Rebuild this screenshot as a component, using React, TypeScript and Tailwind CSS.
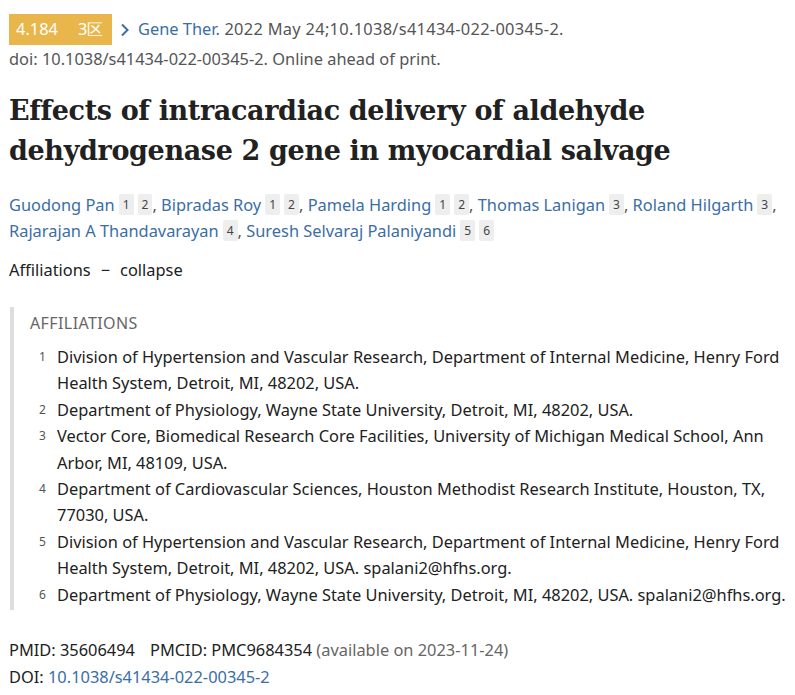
import React from 'react';

const authors = [
  { name: 'Guodong Pan', refs: ['1', '2'] },
  { name: 'Bipradas Roy', refs: ['1', '2'] },
  { name: 'Pamela Harding', refs: ['1', '2'] },
  { name: 'Thomas Lanigan', refs: ['3'] },
  { name: 'Roland Hilgarth', refs: ['3'], br: true },
  { name: 'Rajarajan A Thandavarayan', refs: ['4'] },
  { name: 'Suresh Selvaraj Palaniyandi', refs: ['5', '6'] },
];

const affiliations = [
  ['Division of Hypertension and Vascular Research, Department of Internal Medicine, Henry Ford', 'Health System, Detroit, MI, 48202, USA.'],
  ['Department of Physiology, Wayne State University, Detroit, MI, 48202, USA.'],
  ['Vector Core, Biomedical Research Core Facilities, University of Michigan Medical School, Ann', 'Arbor, MI, 48109, USA.'],
  ['Department of Cardiovascular Sciences, Houston Methodist Research Institute, Houston, TX,', '77030, USA.'],
  ['Division of Hypertension and Vascular Research, Department of Internal Medicine, Henry Ford', 'Health System, Detroit, MI, 48202, USA. spalani2@hfhs.org.'],
  ['Department of Physiology, Wayne State University, Detroit, MI, 48202, USA. spalani2@hfhs.org.'],
];

export default function App() {
  return (
    <div className="min-h-[695px] bg-white px-[9px] pt-[14px] font-['Noto_Sans',sans-serif] text-[16.4px] text-[#212121]">
      {/* journal line */}
      <div className="flex items-center h-[31px]">
        <span className="flex h-[31px] w-[103px] items-center bg-[#e9b64c] pl-[7px] text-white">
          <span>4.184</span>
          <span className="ml-[20px]">3区</span>
        </span>
        <svg className="ml-[8px]" width="10" height="14" viewBox="0 0 10 14" fill="none">
          <path d="M2 1.5 L7.5 7 L2 12.5" stroke="#3a6ea5" strokeWidth="2" />
        </svg>
        <span className="ml-[8px] whitespace-nowrap text-[#555] tracking-[0.3px]">
          <a className="text-[#3a6ea5] tracking-normal">Gene Ther.</a> 2022 May 24;10.1038/s41434-022-00345-2.
        </span>
      </div>
      <div className="mt-[1px] leading-[26px] text-[#555]">
        doi: 10.1038/s41434-022-00345-2. Online ahead of print.
      </div>

      {/* title */}
      <h1 className="mt-[19px] font-['DejaVu_Serif',serif] text-[27px] font-bold leading-[40px] tracking-[-0.35px] text-[#212121]">
        Effects of intracardiac delivery of aldehyde
        <br />
        dehydrogenase 2 gene in myocardial salvage
      </h1>

      {/* authors */}
      <div className="mt-[21px] leading-[26px] text-[#3a6ea5]">
        {authors.map((a, i) => (
          <React.Fragment key={i}>
            <span className="whitespace-nowrap">
              <a>{a.name}</a>
              {a.refs.map((r) => (
                <sup key={r} className="ml-[4px] relative -top-[2px] rounded-[2px] bg-[#eee] px-[4px] py-[2px] text-[12px] text-[#444]">
                  {r}
                </sup>
              ))}
              {i < authors.length - 1 && <span className="text-[#555]">, </span>}
            </span>
            {a.br && <br />}
          </React.Fragment>
        ))}
      </div>

      {/* affiliations toggle */}
      <div className="mt-[13px] flex items-center leading-[26px]">
        <span>Affiliations</span>
        <span className="ml-[10px] text-[#212121]">−</span>
        <span className="ml-[10px]">collapse</span>
      </div>

      {/* affiliations box */}
      <div className="mt-[24px] ml-[1px] border-l-[4px] border-[#ddd] pl-[16px] pb-[2px]">
        <div className="pt-[4px] text-[16px] uppercase tracking-[0.4px] text-[#666]">Affiliations</div>
        <ul className="mt-[9px]">
          {affiliations.map((lines, i) => (
            <li key={i} className="flex leading-[26.4px]">
              <span className="w-[27px] shrink-0 pl-[9px] text-[12px] text-[#555]">{i + 1}</span>
              <span className="whitespace-nowrap">
                {lines.map((l, j) => (
                  <React.Fragment key={j}>
                    {j > 0 && <br />}
                    {l}
                  </React.Fragment>
                ))}
              </span>
            </li>
          ))}
        </ul>
      </div>

      {/* ids */}
      <div className="mt-[26px] leading-[27px]">
        <div>
          PMID: 35606494<span className="ml-[15px]">PMCID: PMC9684354</span>{' '}
          <span className="text-[#666]">(available on 2023-11-24)</span>
        </div>
        <div>
          DOI: <a className="text-[#3a6ea5]">10.1038/s41434-022-00345-2</a>
        </div>
      </div>
    </div>
  );
}
